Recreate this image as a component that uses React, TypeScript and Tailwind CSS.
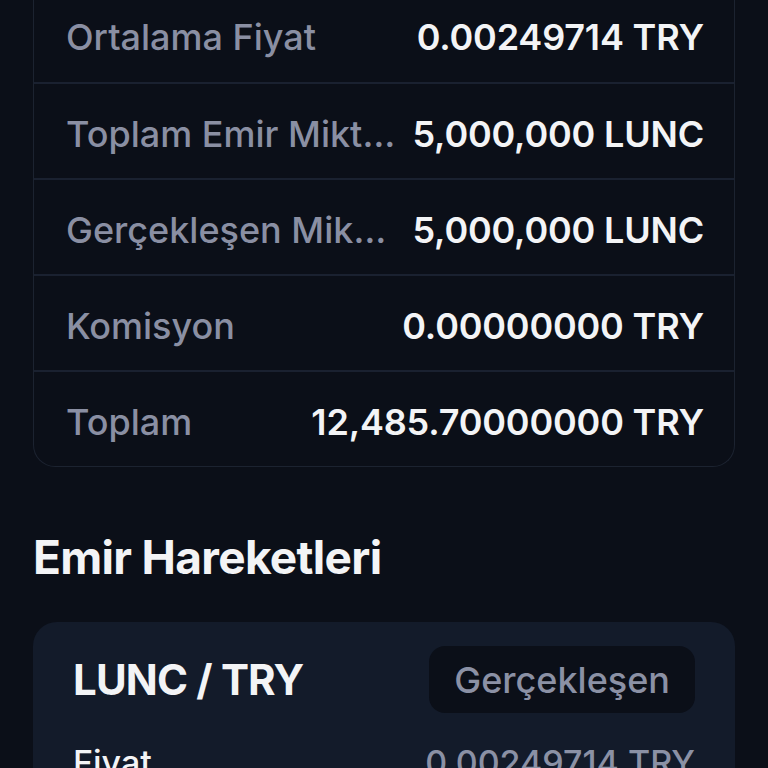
import React from "react";

const rows = [
  { label: "Ortalama Fiyat", value: "0.00249714 TRY" },
  { label: "Toplam Emir Miktarı", value: "5,000,000 LUNC" },
  { label: "Gerçekleşen Miktar", value: "5,000,000 LUNC" },
  { label: "Komisyon", value: "0.00000000 TRY" },
  { label: "Toplam", value: "12,485.70000000 TRY" },
];

export default function App() {
  return (
    <div
      className="h-screen w-full overflow-hidden bg-[#0b0f18] px-[33px] text-[#f3f4f6]"
      style={{ fontFamily: "Inter, 'Noto Sans', sans-serif" }}
    >
      {/* Order summary card (scrolled, top edge off screen) */}
      <div className="-mt-[14px] rounded-b-[22px] border border-t-0 border-[#1c2330]">
        {rows.map((row, i) => (
          <div
            key={row.label}
            className={`flex h-[96px] items-center gap-4 pl-8 pr-[30px] pt-[5px] ${
              i > 0 ? "border-t-2 border-[#1a2130]" : ""
            }`}
          >
            <span className="min-w-0 flex-1 truncate text-[36px] font-medium text-[#8a8fa3]">
              {row.label}
            </span>
            <span className="shrink-0 text-[36px] font-semibold tracking-[-0.005em]">
              {row.value}
            </span>
          </div>
        ))}
      </div>

      <h2 className="mt-[64px] text-[46px] font-bold leading-[52px] tracking-[-0.015em]">
        Emir Hareketleri
      </h2>

      <div className="mt-[39px] rounded-[24px] bg-[#131b2a] px-10 pt-6 pb-8">
        <div className="flex items-center justify-between">
          <span className="text-[42px] font-bold tracking-[-0.02em]">LUNC / TRY</span>
          <span className="flex h-[67px] items-center rounded-[16px] bg-[#0b0f18] px-[25px] text-[36px] font-medium text-[#8b91a5]">
            Gerçekleşen
          </span>
        </div>
        <div className="mt-[24px] flex items-center justify-between text-[34px] font-medium">
          <span>Fiyat</span>
          <span className="text-[#8b91a5]">0.00249714 TRY</span>
        </div>
      </div>
    </div>
  );
}
